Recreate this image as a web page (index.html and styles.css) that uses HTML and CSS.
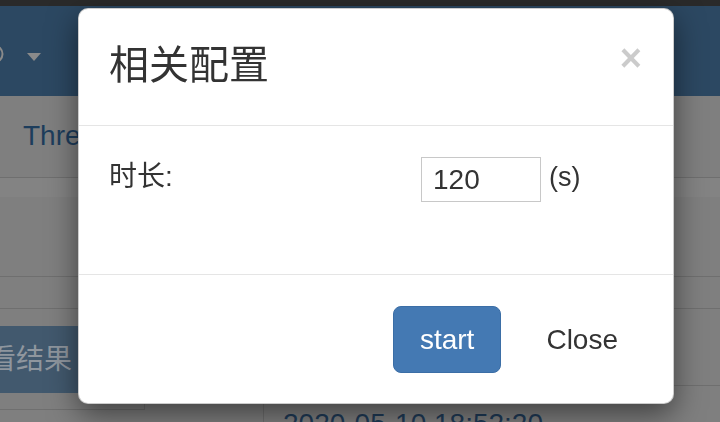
FILE: index.html
```html
<!DOCTYPE html>
<html lang="zh">
<head>
<meta charset="utf-8">
<title>相关配置</title>
<link rel="stylesheet" href="styles.css">
</head>
<body>
<div class="page">
  <div class="topstrip"></div>
  <div class="navbar">
    <svg class="avatar" width="20" height="20" viewBox="0 0 20 20"><circle cx="10" cy="10" r="8.5" fill="none" stroke="#8a8a8a" stroke-width="2"/></svg>
    <span class="caret"></span>
  </div>
  <div class="tabs"><span class="tab">Threads</span></div>
  <div class="band"></div>
  <div class="sec1"></div>
  <div class="sec2"></div>
  <div class="bottom">
    <div class="leftcol">
      <div class="btn-result">查看结果</div>
      <div class="box"></div>
    </div>
    <div class="rightcol">
      <div class="spacer"></div>
      <div class="datecell">2020-05-10 18:52:20</div>
    </div>
  </div>
</div>

<div class="modal">
  <div class="modal-header">
    <h4 class="modal-title">相关配置</h4>
    <span class="close">×</span>
  </div>
  <div class="modal-body">
    <label class="label">时长:</label>
    <input class="input" type="text" value="120">
    <span class="unit">(s)</span>
  </div>
  <div class="modal-footer">
    <button class="btn btn-primary">start</button>
    <button class="btn btn-link">Close</button>
  </div>
</div>
</body>
</html>
```

FILE: styles.css
```css
html, body {
  margin: 0;
  padding: 0;
}
body {
  width: 720px;
  height: 422px;
  overflow: hidden;
  background: #7f7f7f;
  font-family: "Liberation Sans", "Noto Sans CJK SC", sans-serif;
}

.page {
  width: 720px;
}

.topstrip {
  height: 6px;
  background: #2a2a2a;
}

.navbar {
  height: 90px;
  background: #2c4862;
  display: flex;
  align-items: flex-start;
}
.avatar {
  margin-left: -16px;
  margin-top: 38px;
  flex: none;
}
.caret {
  width: 0;
  height: 0;
  margin-left: 23px;
  margin-top: 47px;
  border-left: 7.5px solid transparent;
  border-right: 7.5px solid transparent;
  border-top: 8px solid #8a8a8a;
}

.tabs {
  height: 61px;
  padding: 20px 0 0 23px;
  border-bottom: 1px solid #6f6f6f;
}
.tab {
  font-size: 28px;
  line-height: 40px;
  color: #1d3d5c;
}

.band {
  height: 19px;
  background: #838383;
}
.sec1 {
  height: 79px;
  border-bottom: 1px solid #6f6f6f;
}
.sec2 {
  height: 31px;
  border-bottom: 1px solid #6f6f6f;
}

.bottom {
  display: flex;
}
.leftcol {
  width: 263px;
  flex: none;
  padding-top: 17px;
}
.btn-result {
  margin-left: -64px;
  width: 300px;
  height: 67px;
  padding: 0 24px;
  background: #42596e;
  color: #8f969e;
  font-size: 28px;
  line-height: 67px;
}
.box {
  width: 144px;
  height: 16px;
  border-right: 1px solid #6f6f6f;
  border-bottom: 1px solid #6f6f6f;
}
.rightcol {
  flex: 1;
}
.spacer {
  height: 76px;
  border-bottom: 1px solid #6f6f6f;
}
.datecell {
  border-left: 1px solid #6f6f6f;
  padding: 18px 0 0 19px;
  font-size: 28px;
  line-height: 40px;
  color: #1f3b58;
}

/* modal */
.modal {
  position: fixed;
  left: 78px;
  top: 8px;
  width: 596px;
  height: 396px;
  box-sizing: border-box;
  background: #fff;
  border: 1px solid rgba(0, 0, 0, 0.2);
  border-radius: 10px;
  box-shadow: 0 10px 30px rgba(0, 0, 0, 0.5);
  display: flex;
  flex-direction: column;
  color: #333;
}

.modal-header {
  padding: 28px 30px 31px 30px;
  border-bottom: 1px solid #e5e5e5;
  display: flex;
  justify-content: space-between;
  align-items: flex-start;
}
.modal-title {
  margin: 0;
  font-size: 40px;
  line-height: 57px;
  font-weight: normal;
  color: #333;
}
.close {
  margin-top: 2px;
  margin-right: 1px;
  font-size: 38px;
  line-height: 1;
  font-weight: bold;
  color: #000;
  opacity: 0.2;
}

.modal-body {
  height: 148px;
  box-sizing: border-box;
  padding: 31px 30px 30px 30px;
  display: flex;
  align-items: flex-start;
}
.label {
  width: 312px;
  flex: none;
  font-size: 28px;
  line-height: 40px;
  color: #333;
}
.input {
  width: 120px;
  height: 45px;
  box-sizing: border-box;
  margin: 0;
  padding: 0 11px;
  border: 1px solid #c8c8c8;
  border-radius: 0;
  font-family: "Liberation Sans", sans-serif;
  font-size: 28px;
  color: #333;
  outline: none;
}
.unit {
  margin-left: 8px;
  font-size: 27px;
  line-height: 40px;
  color: #333;
}

.modal-footer {
  border-top: 1px solid #e5e5e5;
  padding: 31px 30px 30px 30px;
  display: flex;
  justify-content: flex-end;
  align-items: flex-start;
}
.btn {
  height: 67px;
  box-sizing: border-box;
  margin: 0;
  font-family: "Liberation Sans", sans-serif;
  font-size: 28px;
  line-height: 65px;
  cursor: pointer;
}
.btn-primary {
  padding: 0 26px;
  background: #4479b3;
  border: 1px solid #3b6ea6;
  border-radius: 8px;
  color: #fff;
}
.btn-link {
  margin-left: 20px;
  padding: 0 24px;
  background: transparent;
  border: 1px solid transparent;
  color: #333;
}
```
